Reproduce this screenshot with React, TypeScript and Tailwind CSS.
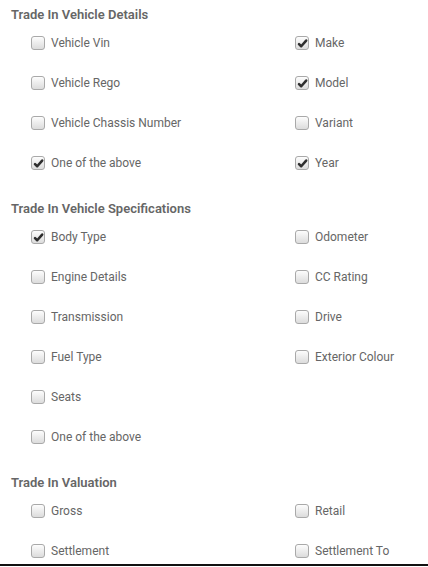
import React from 'react';

type Item = { label: string; checked?: boolean };

const sections: { title: string; rows: [Item, Item | null][] }[] = [
  {
    title: 'Trade In Vehicle Details',
    rows: [
      [{ label: 'Vehicle Vin' }, { label: 'Make', checked: true }],
      [{ label: 'Vehicle Rego' }, { label: 'Model', checked: true }],
      [{ label: 'Vehicle Chassis Number' }, { label: 'Variant' }],
      [{ label: 'One of the above', checked: true }, { label: 'Year', checked: true }],
    ],
  },
  {
    title: 'Trade In Vehicle Specifications',
    rows: [
      [{ label: 'Body Type', checked: true }, { label: 'Odometer' }],
      [{ label: 'Engine Details' }, { label: 'CC Rating' }],
      [{ label: 'Transmission' }, { label: 'Drive' }],
      [{ label: 'Fuel Type' }, { label: 'Exterior Colour' }],
      [{ label: 'Seats' }, null],
      [{ label: 'One of the above' }, null],
    ],
  },
  {
    title: 'Trade In Valuation',
    rows: [
      [{ label: 'Gross' }, { label: 'Retail' }],
      [{ label: 'Settlement' }, { label: 'Settlement To' }],
    ],
  },
];

const Box = ({ checked }: { checked?: boolean }) => (
  <span className="relative flex h-[14px] w-[14px] shrink-0 items-center justify-center rounded-[3px] border border-[#a9a9a9] bg-gradient-to-b from-[#fdfdfd] to-[#dcdcdc]">
    {checked && (
      <svg viewBox="0 0 12 12" className="h-[11px] w-[11px]">
        <path d="M2.2 6.6 L4.6 9 L10 2.8" fill="none" stroke="#2e2e2e" strokeWidth={2.8} strokeLinecap="round" strokeLinejoin="round" />
      </svg>
    )}
  </span>
);

const Check = ({ item }: { item: Item }) => (
  <label className="flex items-center gap-[6px]">
    <Box checked={item.checked} />
    <span className="text-[12px] text-[#666]">{item.label}</span>
  </label>
);

export default function App() {
  return (
    <div className="h-[566px] overflow-hidden border-b-2 border-[#111] bg-white font-['Roboto',sans-serif]">
      {sections.map((s, i) => (
        <section key={s.title} className={i === 0 ? 'pt-[7px]' : 'pt-[18px]'}>
          <h3 className="pl-[11px] text-[13px] font-semibold leading-[16px] text-[#666]">{s.title}</h3>
          <div className="grid grid-cols-[264px_1fr] pl-[31px]">
            {s.rows.map((r, j) => (
              <React.Fragment key={j}>
                <div className="flex h-[40px] items-center">
                  <Check item={r[0]} />
                </div>
                <div className="flex h-[40px] items-center">{r[1] && <Check item={r[1]} />}</div>
              </React.Fragment>
            ))}
          </div>
        </section>
      ))}
    </div>
  );
}
